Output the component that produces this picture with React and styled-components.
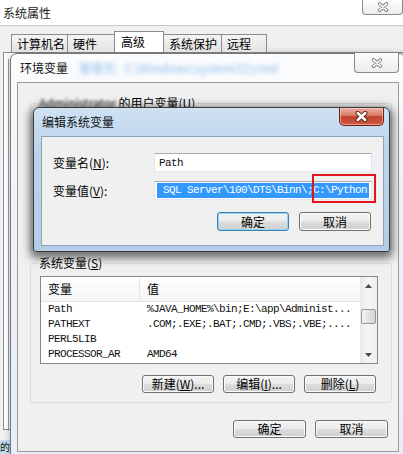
import React from 'react';
import styled, { createGlobalStyle, css } from 'styled-components';

const GlobalStyle = createGlobalStyle`
  html, body { margin: 0; padding: 0; }
  body {
    font-family: "Noto Sans CJK SC", "Noto Sans", sans-serif;
    font-size: 12px;
    color: #000;
  }
`;

const mono = css`
  font-family: "Liberation Mono", "DejaVu Sans Mono", monospace;
  font-size: 11px;
  letter-spacing: -0.6px;
`;

const Desktop = styled.div`
  position: relative;
  width: 403px;
  height: 454px;
  overflow: hidden;
  background: linear-gradient(90deg, #c6ddf0 0%, #e6f0f9 40%, #f4f7fb 60%, #cfe6f5 100%);
`;

const DesktopText = styled.div`
  position: absolute;
  left: 0;
  top: 441px;
  font-size: 10px;
  line-height: 12px;
  color: #111;
`;

/* ---------- window frames ---------- */
const SysWindow = styled.div`
  position: absolute;
  left: -6px;
  top: 0;
  width: 420px;
  height: 440px;
  background: #fff;
  display: flex;
  flex-direction: column;
`;

const PlainTitle = styled.div`
  height: 25px;
  line-height: 25px;
  padding-left: 9px;
  font-size: 12px;
  color: #222;
`;

const GreyClose = styled.div`
  position: absolute;
  top: ${(p) => p.$top}px;
  right: ${(p) => p.$right}px;
  width: ${(p) => p.$w}px;
  height: ${(p) => p.$h}px;
  box-sizing: border-box;
  border: 1px solid #8a8a8a;
  border-top: none;
  border-radius: 0 0 4px 4px;
  background: linear-gradient(#fdfdfd, #ececec);
  display: flex;
  align-items: center;
  justify-content: center;
`;

const RedClose = styled.div`
  position: absolute;
  top: 0;
  right: 5px;
  width: 45px;
  height: 18px;
  box-sizing: border-box;
  border: 1px solid #6b2419;
  border-top: none;
  border-radius: 0 0 5px 5px;
  background: linear-gradient(#eab0a3 0%, #dc7d6b 42%, #c4402d 52%, #cf5a45 100%);
  box-shadow: inset 0 0 0 1px rgba(255, 220, 210, 0.5);
  display: flex;
  align-items: center;
  justify-content: center;
`;

const SysClient = styled.div`
  flex: 1;
  background: #f0f0f0;
  border-top: 1px solid #c9c9c9;
  display: flex;
  flex-direction: column;
`;

const TabRow = styled.div`
  display: flex;
  align-items: flex-end;
  height: 26px;
  padding-left: 18px;
`;

const Tab = styled.div`
  box-sizing: border-box;
  width: ${(p) => p.$w}px;
  height: ${(p) => (p.$active ? 21 : 18)}px;
  padding-left: ${(p) => (p.$active ? 6 : 5)}px;
  line-height: ${(p) => (p.$active ? 19 : 17)}px;
  font-size: 12px;
  border: 1px solid #898c95;
  border-bottom: none;
  margin-left: -1px;
  background: ${(p) => (p.$active ? '#fff' : 'linear-gradient(#f4f4f4, #e3e3e3)')};
  position: relative;
  z-index: ${(p) => (p.$active ? 2 : 1)};
`;

const TabPanel = styled.div`
  margin-left: 9px;
  height: 378px;
  border: 1px solid #898c95;
  background: #fff;
  padding: 6px 0 0 4px;
  box-sizing: border-box;
`;

const TabInner = styled.div`
  height: 100%;
  border-left: 1px solid #9a9a9a;
  background: #f7f7f7;
`;

const EnvWindow = styled.div`
  position: absolute;
  left: 10px;
  top: 53px;
  width: 396px;
  height: 402px;
  box-sizing: border-box;
  border: 1px solid #777;
  border-radius: 7px 7px 0 0;
  background: linear-gradient(#fbfcfd, #eef3f8 40%, #e7eef6);
  box-shadow: 0 0 6px rgba(0, 0, 0, 0.25);
  display: flex;
  flex-direction: column;
`;

const WinTitle = styled.div`
  height: 28px;
  line-height: 28px;
  padding-left: ${(p) => p.$pad}px;
  font-size: 12px;
  color: #111;
  display: flex;
  align-items: center;
  white-space: nowrap;
`;

const Blurred = styled.span`
  filter: blur(${(p) => p.$blur || 1.6}px);
  color: ${(p) => p.$color};
  margin-left: ${(p) => p.$ml || 0}px;
`;

const EnvClient = styled.div`
  flex: 1;
  margin: 0 6px 2px 6px;
  border: 1px solid #9a9a9a;
  background: #f0f0f0;
  display: flex;
  flex-direction: column;
  padding: 20px 6px 0 12px;
`;

const Group = styled.div`
  position: relative;
  box-sizing: border-box;
  height: ${(p) => p.$h}px;
  margin-top: ${(p) => p.$mt || 0}px;
  border: 1px solid #d5dfe5;
  border-radius: 3px;
  padding: 12px 13px 9px 9px;
  display: flex;
  flex-direction: column;
`;

const Legend = styled.div`
  position: absolute;
  top: -8px;
  left: 6px;
  padding: 0 2px;
  background: #f0f0f0;
  font-size: 12px;
  line-height: 14px;
  white-space: nowrap;
`;

const ButtonRow = styled.div`
  display: flex;
  justify-content: flex-end;
  gap: ${(p) => p.$gap || 9}px;
  margin-top: ${(p) => p.$mt}px;
  padding-right: ${(p) => p.$pr || 0}px;
`;

const Button = styled.div`
  box-sizing: border-box;
  width: ${(p) => p.$w}px;
  height: ${(p) => p.$h || 18}px;
  border: 1px solid ${(p) => (p.$default ? '#3c7fb1' : '#707070')};
  border-radius: 3px;
  background: linear-gradient(#f3f3f3 0%, #ebebeb 48%, #dddddd 52%, #cfcfcf 100%);
  box-shadow: inset 0 0 0 1px ${(p) => (p.$default ? '#8fd6f6' : '#fbfbfb')};
  display: flex;
  align-items: center;
  justify-content: center;
  font-size: 12px;
  line-height: 14px;
  white-space: nowrap;
`;

/* ---------- list view ---------- */
const ListBox = styled.div`
  box-sizing: border-box;
  height: 88px;
  border: 1px solid #828790;
  background: #fff;
  display: flex;
`;

const ListMain = styled.div`
  flex: 1;
  overflow: hidden;
`;

const HeaderRow = styled.div`
  display: flex;
  height: 25px;
  background: linear-gradient(#ffffff, #f3f4f6);
  border-bottom: 1px solid #e2e3e5;
  box-sizing: border-box;
`;

const HeaderCell = styled.div`
  box-sizing: border-box;
  width: ${(p) => (p.$w ? `${p.$w}px` : 'auto')};
  flex: ${(p) => (p.$w ? 'none' : 1)};
  padding-left: 7px;
  line-height: 24px;
  font-size: 12px;
  border-right: ${(p) => (p.$w ? '1px solid #e5e5e5' : 'none')};
`;

const Row = styled.div`
  display: flex;
  height: 15px;
  line-height: 15px;
  white-space: nowrap;
`;

const Cell = styled.div`
  ${mono}
  box-sizing: border-box;
  width: ${(p) => (p.$w ? `${p.$w}px` : 'auto')};
  flex: ${(p) => (p.$w ? 'none' : 1)};
  padding-left: 7px;
  overflow: hidden;
  color: #111;
`;

const ScrollBar = styled.div`
  width: 17px;
  display: flex;
  flex-direction: column;
  background: linear-gradient(90deg, #e8e8e8, #f6f6f6 50%, #eeeeee);
`;

const ScrollArrow = styled.div`
  height: 17px;
  display: flex;
  align-items: center;
  justify-content: center;
`;

const ScrollTrack = styled.div`
  flex: 1;
  padding: 15px 1px 0 1px;
`;

const Thumb = styled.div`
  height: 15px;
  box-sizing: border-box;
  border: 1px solid #979797;
  border-radius: 2px;
  background: linear-gradient(90deg, #f4f4f4, #e2e2e2 50%, #d4d4d4);
`;

/* ---------- edit dialog ---------- */
const EditWindow = styled.div`
  position: absolute;
  left: 33px;
  top: 107px;
  width: 357px;
  height: 145px;
  box-sizing: border-box;
  border: 1px solid #3a3a3a;
  border-radius: 6px 6px 3px 3px;
  background: linear-gradient(#cfe1f3 0%, #bcd4ed 30%, #b4cde8 100%);
  box-shadow: 0 3px 9px 3px rgba(0, 0, 0, 0.55);
  display: flex;
  flex-direction: column;
`;

const EditClient = styled.div`
  position: relative;
  flex: 1;
  margin: 0 5px 5px 7px;
  border: 1px solid #8fa3ba;
  background: #f0f0f0;
  padding: 16px 11px 0 11px;
  display: flex;
  flex-direction: column;
`;

const FieldRow = styled.div`
  display: grid;
  grid-template-columns: 101px 1fr;
  align-items: center;
  margin-top: ${(p) => p.$mt || 0}px;
`;

const FieldLabel = styled.div`
  font-size: 12px;
  line-height: 14px;
  white-space: nowrap;
`;

const Input = styled.div`
  ${mono}
  box-sizing: border-box;
  height: 19px;
  border: 1px solid #abadb3;
  border-left-color: #e2e3ea;
  border-right-color: #dbdfe6;
  border-bottom-color: #e3e9ef;
  background: #fff;
  padding: 1px 2px;
  display: flex;
  align-items: center;
  white-space: pre;
  overflow: hidden;
`;

const Selected = styled.span`
  flex: 1;
  height: 15px;
  line-height: 15px;
  background: #3399ff;
  color: #fff;
  white-space: pre;
`;

const Plain = styled.span`
  padding-left: 2px;
  color: #111;
`;

const Annotation = styled.div`
  position: absolute;
  left: 270px;
  top: 37px;
  width: 64px;
  height: 29px;
  box-sizing: border-box;
  border: 2px solid #e2141e;
  pointer-events: none;
`;

const XGlyph = ({ red }) => (
  <svg width={red ? 13 : 12} height={red ? 11 : 10} viewBox="0 0 12 10">
    <path d="M2.5 1.8 L9.5 8.2 M9.5 1.8 L2.5 8.2" stroke={red ? '#5a1a10' : '#707070'} strokeWidth={red ? 4 : 3.4} strokeLinecap="round" />
    <path d="M2.5 1.8 L9.5 8.2 M9.5 1.8 L2.5 8.2" stroke="#fff" strokeWidth={red ? 2.4 : 1.8} strokeLinecap="round" />
  </svg>
);

const Arrow = ({ down }) => (
  <svg width="7" height="4" viewBox="0 0 7 4">
    <path d={down ? 'M0 0 L7 0 L3.5 4 Z' : 'M0 4 L7 4 L3.5 0 Z'} fill="#4a4a4a" />
  </svg>
);

const U = styled.span`
  text-decoration: underline;
`;

const rows = [
  ['Path', '%JAVA_HOME%\\bin;E:\\app\\Administ...'],
  ['PATHEXT', '.COM;.EXE;.BAT;.CMD;.VBS;.VBE;....'],
  ['PERL5LIB', ''],
  ['PROCESSOR_AR', 'AMD64'],
];

const tabs = [
  ['计算机名', 57],
  ['硬件', 48],
  ['高级', 50, true],
  ['系统保护', 59],
  ['远程', 46],
];

export default function App() {
  return (
    <Desktop>
      <GlobalStyle />
      <DesktopText>的|</DesktopText>

      <SysWindow>
        <PlainTitle>系统属性</PlainTitle>
        <GreyClose $top={0} $right={11} $w={41} $h={15}>
          <XGlyph />
        </GreyClose>
        <SysClient>
          <TabRow>
            {tabs.map(([t, w, a]) => (
              <Tab key={t} $w={w} $active={a}>{t}</Tab>
            ))}
          </TabRow>
          <TabPanel>
            <TabInner />
          </TabPanel>
        </SysClient>
      </SysWindow>

      <EnvWindow>
        <WinTitle $pad={9}>
          环境变量
          <Blurred $color="#8dbbea" $blur={2.2} $ml={11}>管理员:</Blurred>
          <Blurred $color="#8dbbea" $blur={2.2} $ml={6}>C:\Windows\system32\cmd</Blurred>
        </WinTitle>
        <GreyClose $top={-1} $right={6} $w={45} $h={20}>
          <XGlyph />
        </GreyClose>
        <EnvClient>
          <Group $h={148}>
            <Legend>
              <Blurred $color="#222">Administrator</Blurred> 的用户变量(<U>U</U>)
            </Legend>
          </Group>
          <Group $h={140} $mt={12}>
            <Legend>系统变量(<U>S</U>)</Legend>
            <ListBox>
              <ListMain>
                <HeaderRow>
                  <HeaderCell $w={99}>变量</HeaderCell>
                  <HeaderCell>值</HeaderCell>
                </HeaderRow>
                {rows.map(([n, v]) => (
                  <Row key={n}>
                    <Cell $w={99}>{n}</Cell>
                    <Cell>{v}</Cell>
                  </Row>
                ))}
              </ListMain>
              <ScrollBar>
                <ScrollArrow><Arrow /></ScrollArrow>
                <ScrollTrack><Thumb /></ScrollTrack>
                <ScrollArrow><Arrow down /></ScrollArrow>
              </ScrollBar>
            </ListBox>
            <ButtonRow $mt={11} $pr={2}>
              <Button $w={72}>新建(<U>W</U>)...</Button>
              <Button $w={72}>编辑(<U>I</U>)...</Button>
              <Button $w={72}>删除(<U>L</U>)</Button>
            </ButtonRow>
          </Group>
          <ButtonRow $mt={17} $pr={4}>
            <Button $w={73}>确定</Button>
            <Button $w={73}>取消</Button>
          </ButtonRow>
        </EnvClient>
      </EnvWindow>

      <EditWindow>
        <WinTitle $pad={8}>编辑系统变量</WinTitle>
        <RedClose>
          <XGlyph red />
        </RedClose>
        <EditClient>
          <FieldRow>
            <FieldLabel>变量名(<U>N</U>):</FieldLabel>
            <Input><Plain>Path</Plain></Input>
          </FieldRow>
          <FieldRow $mt={9}>
            <FieldLabel>变量值(<U>V</U>):</FieldLabel>
            <Input><Selected>{' SQL Server\\100\\DTS\\Binn\\;C:\\Python'}</Selected></Input>
          </FieldRow>
          <ButtonRow $mt={12} $gap={10} $pr={1}>
            <Button $w={72} $h={19} $default>确定</Button>
            <Button $w={72} $h={19}>取消</Button>
          </ButtonRow>
          <Annotation />
        </EditClient>
      </EditWindow>
    </Desktop>
  );
}
